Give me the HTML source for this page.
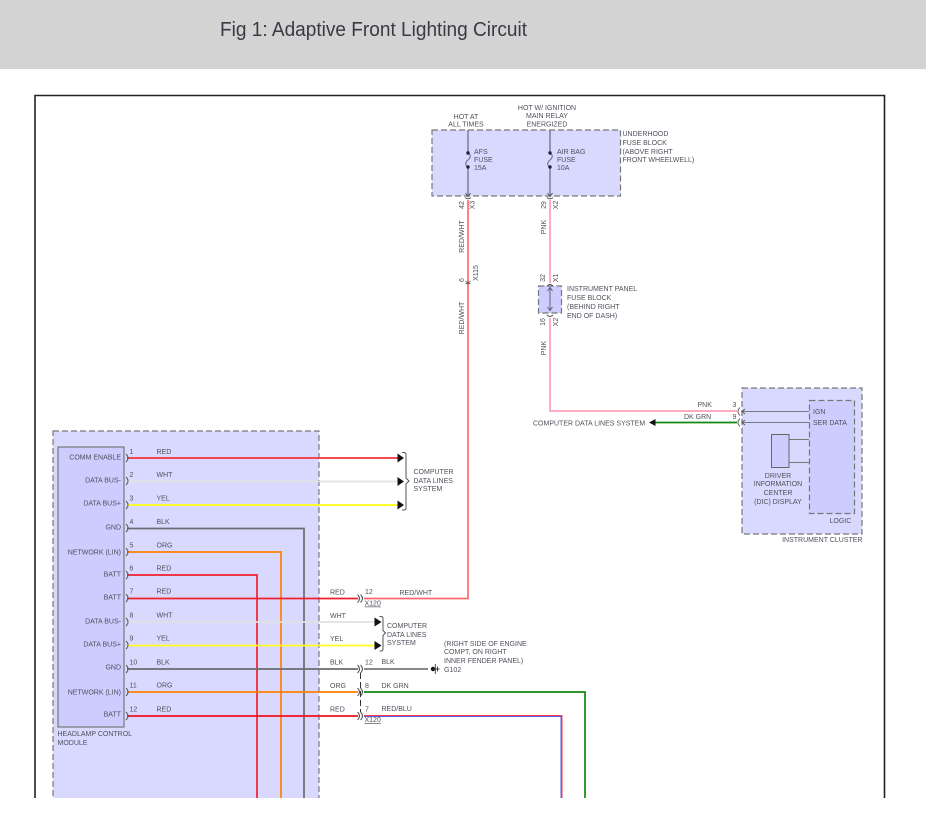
<!DOCTYPE html>
<html><head><meta charset="utf-8"><title>Fig 1</title>
<style>
html,body{margin:0;padding:0;background:#fff}
body{width:926px;height:819px;overflow:hidden;position:relative}
svg{position:absolute;left:0;top:0;display:block}
text{font-family:"Liberation Sans",sans-serif;font-size:7px;fill:#50505c}
.t{font-size:20px;fill:#3a3a44}
.e{text-anchor:end}.m{text-anchor:middle}
.u{text-decoration:underline}
.c{fill:none;stroke:#555;stroke-width:1}
.w{fill:none;stroke-width:1.700}
.soft{filter:blur(.3px)}
</style></head><body>
<svg width="926" height="819" viewBox="0 0 926 819" xmlns="http://www.w3.org/2000/svg">
<rect x="0" y="0" width="926" height="69" fill="#d3d3d3"/>
<text class="t" x="220" y="36" textLength="307" lengthAdjust="spacingAndGlyphs">Fig 1: Adaptive Front Lighting Circuit</text>

<g class="soft">
<path d="M35 798V95.500H884.500V798" fill="none" stroke="#222" stroke-width="1.600"/>

<!-- panels -->
<rect x="53" y="431" width="266" height="380" fill="#d9d9ff" stroke="#777" stroke-width="1.200" stroke-dasharray="6 3"/>
<rect x="58" y="447" width="66" height="280" fill="#ccccff" stroke="#777" stroke-width="1.200"/>
<rect x="432" y="130" width="188.500" height="66" fill="#d9d9ff" stroke="#777" stroke-width="1.200" stroke-dasharray="6 3"/>
<rect x="538.500" y="286" width="23" height="27" fill="#ccccff" stroke="#777" stroke-width="1.200" stroke-dasharray="6 3"/>
<rect x="742" y="388" width="120" height="146" fill="#d9d9ff" stroke="#777" stroke-width="1.200" stroke-dasharray="6 3"/>
<rect x="809.500" y="400.500" width="45" height="113" fill="#ccccff" stroke="#777" stroke-width="1.200" stroke-dasharray="6 3"/>
<rect x="771.500" y="434.500" width="17.500" height="33" fill="#ccccff" stroke="#666" stroke-width="1"/>
<path d="M789 439.500H809M789 462.500H809" stroke="#777" stroke-width="1" fill="none"/>

<!-- internal gray wires upper block -->
<path d="M468 130V153M468 167V196M550 130V153M550 167V196" stroke="#667" stroke-width="1.200" fill="none"/>
<path d="M468 153c3.500 2 2.500 5 0 7s-3.500 5 0 7M550 153c3.500 2 2.500 5 0 7s-3.500 5 0 7" stroke="#667" stroke-width="1" fill="none"/>
<circle cx="468" cy="153" r="1.700" fill="#223"/><circle cx="468" cy="167" r="1.700" fill="#223"/>
<circle cx="550" cy="153" r="1.700" fill="#223"/><circle cx="550" cy="167" r="1.700" fill="#223"/>
<path d="M465.500 193l2.500 3.500l2.500-3.500M547.500 193l2.500 3.500l2.500-3.500" fill="none" stroke="#556" stroke-width="1"/>
<path d="M465 197.500q3 2.500 6 0M547 197.500q3 2.500 6 0" class="c"/>

<!-- vertical feed wires -->
<path class="w" d="M468 200V598.500H364" stroke="#ff6a72"/>
<path class="w" d="M550 200V283M550 318V411H737" stroke="#ffa0b8"/>
<path d="M550 288V310" stroke="#667" stroke-width="1" fill="none"/>
<path d="M547.500 307l2.500 3.500l2.500-3.500M547.500 291l2.500-3.500l2.500 3.500" fill="none" stroke="#556" stroke-width="0.800"/>
<path class="c" d="M547 286q3-3 6 0M547 315q3 3 6 0"/>
<path class="c" d="M465.500 281.500q2.500 1.500 5 0M465.500 284q2.500-1.500 5 0" stroke-width="0.900"/>
<path class="w" d="M655 422.500H737" stroke="#118811"/>
<path d="M649 422.500L655.500 419V426Z" fill="#111"/>

<!-- cluster wires -->
<path d="M742 411.500H809M742 422.500H809" stroke="#778" stroke-width="1" fill="none"/>
<path d="M745 409l-3 2.500l3 2.500M745 420l-3 2.500l3 2.500M740 407.500q-4 4 0 8M740 418.500q-4 4 0 8" fill="none" stroke="#555" stroke-width="0.900"/>

<!-- verticals from module -->
<path class="w" d="M127 528.500H304V811" stroke="#6b6b70"/>
<path class="w" d="M127 552H281V811" stroke="#ff8000"/>
<path class="w" d="M127 575H257V811" stroke="#f0202c"/>

<!-- horizontals -->
<path class="w" d="M127 458H398" stroke="#f8303c"/>
<path class="w" d="M127 481.500H398" stroke="#e3e3e3"/>
<path class="w" d="M127 505H398" stroke="#ffff10"/>
<path class="w" d="M127 598.500H358" stroke="#f01f2b"/>
<path class="w" d="M127 622H375" stroke="#e0e0e0"/>
<path class="w" d="M127 645.500H375" stroke="#ffff20"/>
<path class="w" d="M127 669H358" stroke="#6b6b70"/>
<path class="w" d="M364 669H428" stroke="#777"/>
<path class="w" d="M127 692H358" stroke="#ff8000"/>
<path class="w" d="M127 716H358" stroke="#f01020"/>
<path class="w" d="M364 692H585V811" stroke="#118811"/>
<path d="M364 715.500H562V811" fill="none" stroke="#f8404c" stroke-width="1"/>
<path d="M364 716.500H561V811" fill="none" stroke="#5a5ae0" stroke-width="1"/>

<!-- pin connectors -->
<path class="c" d="M126 454q4 4 0 8M126 477q4 4 0 8M126 501q4 4 0 8M126 524q4 4 0 8M126 548q4 4 0 8M126 571q4 4 0 8M126 594q4 4 0 8M126 618q4 4 0 8M126 641q4 4 0 8M126 665q4 4 0 8M126 688q4 4 0 8M126 712q4 4 0 8"/>
<!-- inline connectors -->
<path class="c" d="M357.500 594.500q4 4 0 8M360.500 594.500q4 4 0 8M357.500 665q4 4 0 8M360.500 665q4 4 0 8M357.500 688q4 4 0 8M360.500 688q4 4 0 8M357.500 712q4 4 0 8M360.500 712q4 4 0 8"/>
<path d="M360.500 673V712" stroke="#333" stroke-width="1" stroke-dasharray="6 3" fill="none"/>

<!-- arrows -->
<path d="M397.500 453.500L404 458L397.500 462.500ZM397.500 477L404 481.500L397.500 486ZM397.500 500.500L404 505L397.500 509.500ZM374.500 617.500L381.500 622L374.500 626.500ZM374.500 641L381.500 645.500L374.500 650Z" fill="#111"/>

<!-- braces -->
<path class="c" d="M402 452.500h2q2 0 2 2V478l3 3l-3 3v24q0 2-2 2h-2"/>
<path class="c" d="M379.500 616.500h1.500q2 0 2 2V630.500l2.500 2.500l-2.500 2.500V649q0 2-2 2h-1.500"/>

<!-- ground -->
<circle cx="433" cy="669" r="2.200" fill="#111"/>
<path d="M433 669H439.500M435.300 664V674M437.500 666.500V671.500" stroke="#333" stroke-width="0.900" fill="none"/>

<!-- module labels -->
<g transform="translate(0 -0.700)">
<text class="e" x="121" y="460">COMM ENABLE</text>
<text class="e" x="121" y="483">DATA BUS-</text>
<text class="e" x="121" y="506">DATA BUS+</text>
<text class="e" x="121" y="530">GND</text>
<text class="e" x="121" y="555">NETWORK (LIN)</text>
<text class="e" x="121" y="577">BATT</text>
<text class="e" x="121" y="600">BATT</text>
<text class="e" x="121" y="624">DATA BUS-</text>
<text class="e" x="121" y="647">DATA BUS+</text>
<text class="e" x="121" y="670">GND</text>
<text class="e" x="121" y="695">NETWORK (LIN)</text>
<text class="e" x="121" y="717">BATT</text>

<text x="129.500" y="454.500">1</text><text x="156.500" y="454.500">RED</text>
<text x="129.500" y="477.500">2</text><text x="156.500" y="477.500">WHT</text>
<text x="129.500" y="501">3</text><text x="156.500" y="501">YEL</text>
<text x="129.500" y="524.500">4</text><text x="156.500" y="524.500">BLK</text>
<text x="129.500" y="548">5</text><text x="156.500" y="548">ORG</text>
<text x="129.500" y="571">6</text><text x="156.500" y="571">RED</text>
<text x="129.500" y="594">7</text><text x="156.500" y="594">RED</text>
<text x="129.500" y="618">8</text><text x="156.500" y="618">WHT</text>
<text x="129.500" y="641">9</text><text x="156.500" y="641">YEL</text>
<text x="129.500" y="665">10</text><text x="156.500" y="665">BLK</text>
<text x="129.500" y="688">11</text><text x="156.500" y="688">ORG</text>
<text x="129.500" y="712">12</text><text x="156.500" y="712">RED</text>
</g>
<text x="57.500" y="736">HEADLAMP CONTROL</text>
<text x="57.500" y="745">MODULE</text>

<!-- middle column -->
<text x="330" y="594.500">RED</text>
<text x="330" y="618">WHT</text>
<text x="330" y="641">YEL</text>
<text x="330" y="664.500">BLK</text>
<text x="330" y="688">ORG</text>
<text x="330" y="711.500">RED</text>
<text x="365" y="594">12</text>
<text class="u" x="364.500" y="605.500">X120</text>
<text x="399.500" y="595">RED/WHT</text>
<text x="365" y="664.500">12</text><text x="381.500" y="664">BLK</text>
<text x="365" y="688">8</text><text x="381.500" y="688">DK GRN</text>
<text x="365" y="711.500">7</text><text x="381.500" y="711">RED/BLU</text>
<text class="u" x="364.500" y="722">X120</text>

<text x="413.500" y="474">COMPUTER</text>
<text x="413.500" y="483">DATA LINES</text>
<text x="413.500" y="491">SYSTEM</text>
<text x="387" y="628">COMPUTER</text>
<text x="387" y="637">DATA LINES</text>
<text x="387" y="645">SYSTEM</text>

<text x="444" y="646">(RIGHT SIDE OF ENGINE</text>
<text x="444" y="654">COMPT, ON RIGHT</text>
<text x="444" y="663">INNER FENDER PANEL)</text>
<text x="444" y="672">G102</text>

<!-- top -->
<text class="m" x="466" y="119">HOT AT</text>
<text class="m" x="466" y="126.500">ALL TIMES</text>
<text class="m" x="547" y="110">HOT W/ IGNITION</text>
<text class="m" x="547" y="118">MAIN RELAY</text>
<text class="m" x="547" y="126.500">ENERGIZED</text>
<text x="622.500" y="136">UNDERHOOD</text>
<text x="622.500" y="145">FUSE BLOCK</text>
<text x="622.500" y="154">(ABOVE RIGHT</text>
<text x="622.500" y="162">FRONT WHEELWELL)</text>
<text x="474" y="154">AFS</text><text x="474" y="162">FUSE</text><text x="474" y="170">15A</text>
<text x="557" y="154">AIR BAG</text><text x="557" y="162">FUSE</text><text x="557" y="170">10A</text>

<text class="m" transform="translate(464 205) rotate(-90)">42</text>
<text class="m" transform="translate(474.500 205) rotate(-90)">X3</text>
<text class="m" transform="translate(464 236.500) rotate(-90)">RED/WHT</text>
<text class="m" transform="translate(546 205) rotate(-90)">29</text>
<text class="m" transform="translate(558 205) rotate(-90)">X2</text>
<text class="m" transform="translate(546 227) rotate(-90)">PNK</text>
<text class="m" transform="translate(464 280) rotate(-90)">6</text>
<text class="m" transform="translate(478 273) rotate(-90)">X115</text>
<text class="m" transform="translate(464 318) rotate(-90)">RED/WHT</text>
<text class="m" transform="translate(545 278) rotate(-90)">32</text>
<text class="m" transform="translate(558 278) rotate(-90)">X1</text>
<text class="m" transform="translate(545 322) rotate(-90)">16</text>
<text class="m" transform="translate(558 322) rotate(-90)">X2</text>
<text class="m" transform="translate(546 348) rotate(-90)">PNK</text>

<text x="567" y="291">INSTRUMENT PANEL</text>
<text x="567" y="300">FUSE BLOCK</text>
<text x="567" y="309">(BEHIND RIGHT</text>
<text x="567" y="318">END OF DASH)</text>

<!-- cluster -->
<text x="697.500" y="407">PNK</text>
<text x="684" y="419">DK GRN</text>
<text x="732.500" y="407">3</text>
<text x="732.500" y="419">9</text>
<text x="533" y="425.500">COMPUTER DATA LINES SYSTEM</text>
<text x="813" y="414">IGN</text>
<text x="813" y="425">SER DATA</text>
<text class="m" x="778" y="478">DRIVER</text>
<text class="m" x="778" y="486">INFORMATION</text>
<text class="m" x="778" y="495">CENTER</text>
<text class="m" x="778" y="504">(DIC) DISPLAY</text>
<text x="829.500" y="523">LOGIC</text>
<text class="e" x="862.500" y="542">INSTRUMENT CLUSTER</text>
</g>

<rect x="0" y="798" width="926" height="21" fill="#fff"/>
</svg>
</body></html>
